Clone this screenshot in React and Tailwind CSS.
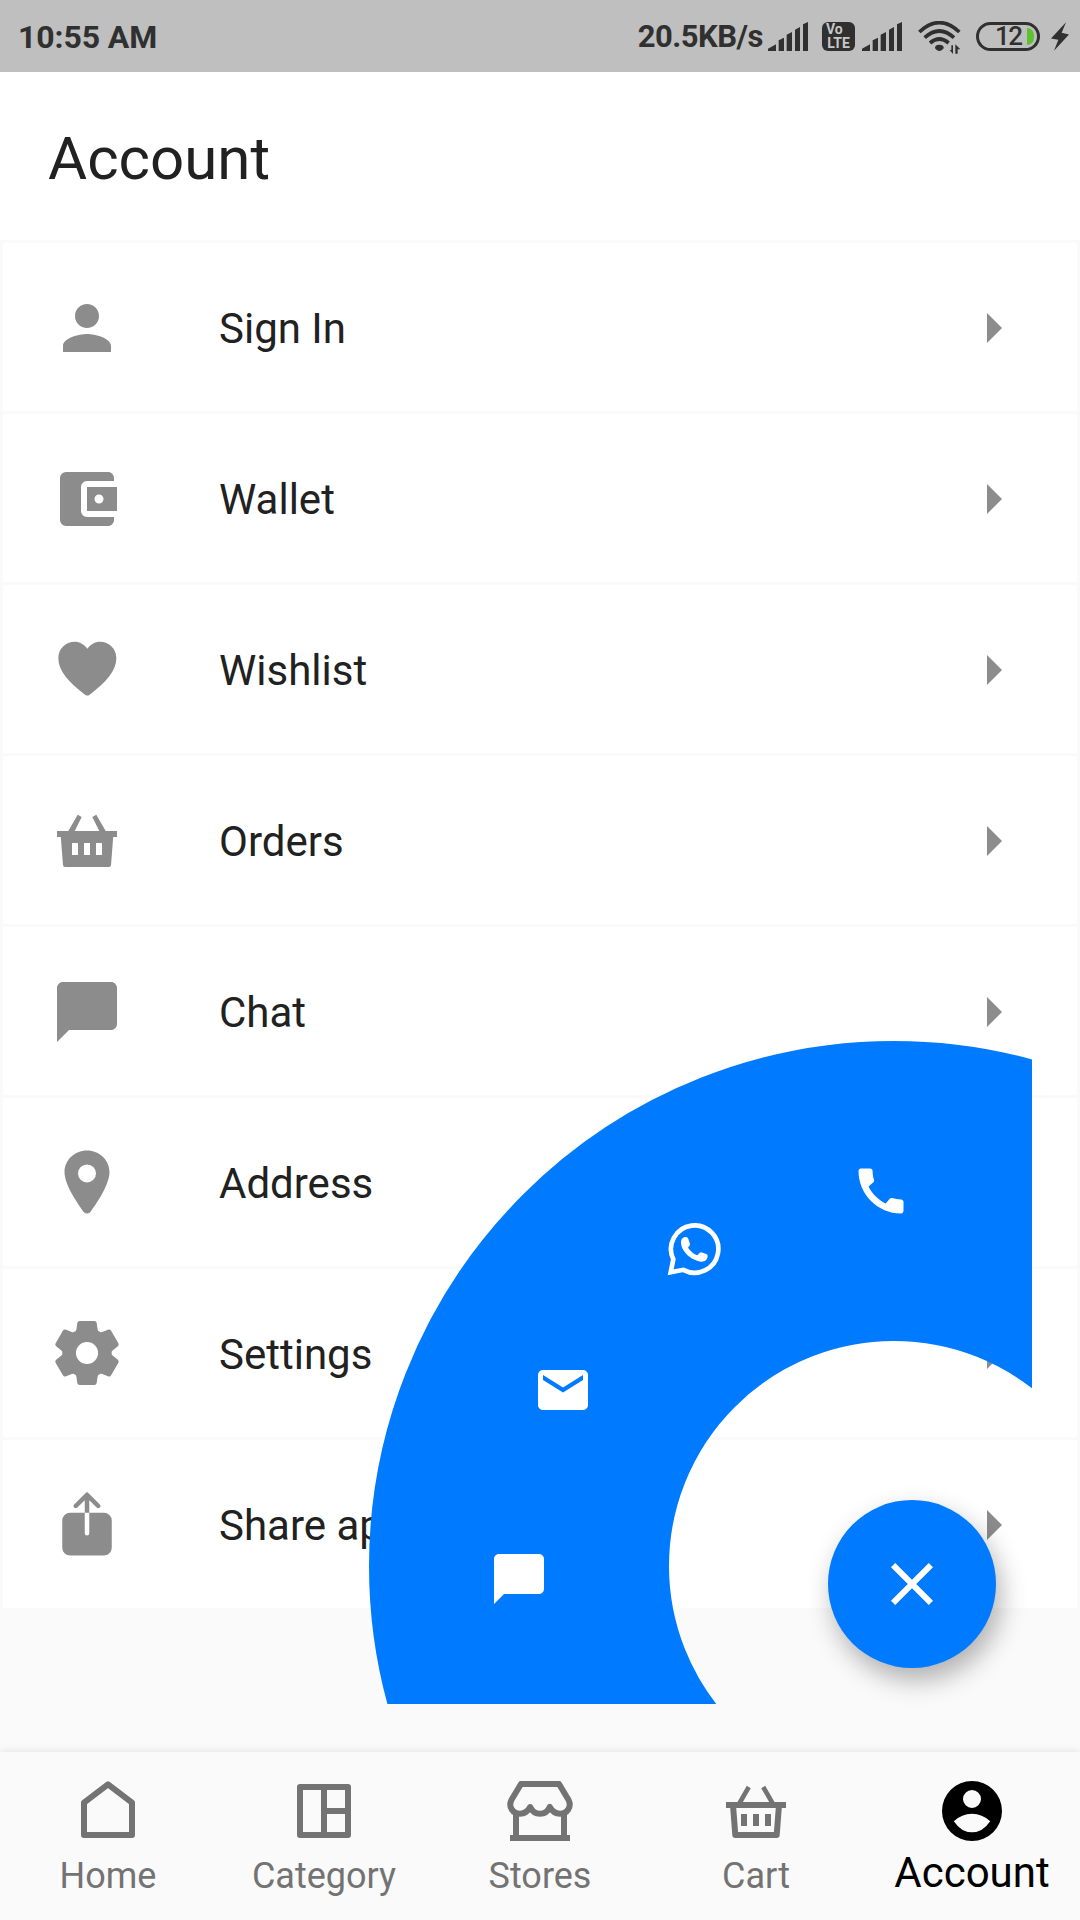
import React from 'react';
import { MdPerson, MdAccountBalanceWallet, MdChatBubble, MdArrowRight, MdEmail, MdClose } from 'react-icons/md';
import { IoShare } from 'react-icons/io5';

const HeartIcon = ({ className }) => (
  <svg viewBox="0 0 216 216" className={className} fill="currentColor">
    <path d="M109 44C118 31 132 23 147 23C174 23 196 44 196 72C196 112 165 144 116 182Q109 187 102 182C53 144 22 112 22 72C22 44 44 23 71 23C86 23 100 31 109 44Z" />
  </svg>
);

const BasketIcon = ({ className }) => (
  <svg viewBox="0 0 72 72" className={className} fill="currentColor">
    <path
      fillRule="evenodd"
      d="M6 26H17.3L26.7 9.7L30.7 12L23.7 26H48.3L41.3 12L45.3 9.7L54.7 26H66V32H62.2L60 60.2Q59.8 62 58 62H14Q12.2 62 12 60.2L9.8 32H6ZM21 38V50H27V38ZM33 38V50H39V38ZM45 38V50H51V38Z"
    />
  </svg>
);

const PinIcon = ({ className }) => (
  <svg viewBox="0 0 512 512" className={className} fill="currentColor">
    <path
      fillRule="evenodd"
      d="M256 32C167.78 32 96 100.65 96 185c0 40.17 18.31 93.59 54.42 158.78 29 52.34 62.55 99.67 80 123.22a31.75 31.75 0 0 0 51.22 0c17.42-23.55 51-70.88 80-123.22C397.69 278.61 416 225.19 416 185 416 100.65 344.22 32 256 32zM256 131a64 64 0 1 1 0 128a64 64 0 1 1 0-128z"
    />
  </svg>
);

const GEAR_ANGLES = [0, 60, 120, 180, 240, 300];

const GearIcon = ({ className }) => (
  <svg viewBox="-109 -109 218 218" className={className} fill="currentColor">
    <circle r="68" />
    {GEAR_ANGLES.map((angle) => (
      <path
        key={angle}
        transform={`rotate(${angle})`}
        d="M0 0L-38 -64Q-33 -65 -32 -72L-29.5 -90Q-28.5 -97 -22 -97H22Q28.5 -97 29.5 -90L32 -72Q33 -65 38 -64Z"
      />
    ))}
    <circle r="33.5" fill="#fff" />
  </svg>
);

const HomeIcon = ({ className }) => (
  <svg viewBox="0 0 72 72" className={className} fill="none" stroke="currentColor" strokeWidth="6" strokeLinejoin="round">
    <path d="M36 9.4L12 27.6V60H60V27.6Z" />
  </svg>
);

const CategoryIcon = ({ className }) => (
  <svg viewBox="0 0 72 72" className={className} fill="none" stroke="currentColor" strokeWidth="6" strokeLinejoin="round">
    <path d="M12 12H60V60H12ZM36 12V60M36 36H60" />
  </svg>
);

const StoreIcon = ({ className }) => (
  <svg viewBox="0 0 72 72" className={className} fill="none" stroke="currentColor" strokeWidth="6" strokeLinejoin="round">
    <path d="M17 9H55L64.6 25C68 32 63 38.7 56 38.7C51.5 38.7 48 36 45.8 32C44 36 40.5 38.7 36 38.7C31.5 38.7 28 36 26.2 32C24 36 20.5 38.7 16 38.7C9 38.7 4 32 7.4 25Z" />
    <path d="M12 37V63M60 37V63M6 63H66" />
  </svg>
);

const CartIcon = ({ className }) => (
  <svg viewBox="0 0 72 72" className={className} fill="none" stroke="currentColor" strokeWidth="6" strokeLinejoin="round">
    <path d="M6 30H66M13 30L15.3 60H56.7L59 30" />
    <path strokeWidth="4.6" d="M28.8 12L19 29M43.2 12L53 29" />
    <path d="M24 39V51M36 39V51M48 39V51" />
  </svg>
);

const AccountIcon = ({ className }) => (
  <svg viewBox="0 0 24 24" className={className} fill="currentColor">
    <path
      fillRule="evenodd"
      d="M12 2a10 10 0 1 1 0 20a10 10 0 1 1 0-20zM12 5a3 3 0 1 0 0 6a3 3 0 1 0 0-6zM5.95 15.4Q8.6 12.9 12 12.9T18.05 15.4Q15.6 19.1 12 19.1T5.95 15.4z"
    />
  </svg>
);

const PhoneIcon = ({ className }) => (
  <svg viewBox="0 0 24 24" className={className} fill="currentColor">
    <path d="M20.01 15.38c-1.23 0-2.42-.2-3.53-.56a.977.977 0 0 0-1.01.24l-1.57 1.97c-2.83-1.35-5.48-3.9-6.89-6.83l1.95-1.66c.27-.28.35-.67.24-1.02-.37-1.11-.56-2.3-.56-3.53 0-.54-.45-.99-.99-.99H4.19C3.65 3 3 3.24 3 3.99 3 13.28 10.73 21 20.01 21c.71 0 .99-.63.99-1.18v-3.45c0-.54-.45-.99-.99-.99z" />
  </svg>
);

const WhatsappIcon = ({ className }) => (
  <svg viewBox="0 0 180 180" className={className}>
    <path
      fill="none"
      stroke="currentColor"
      strokeWidth="14"
      d="M58 152.5A71 71 0 1 0 28 121L20 160Z"
    />
    <path
      fill="currentColor"
      d="M51 70C51 60 57 53 66 54Q71 54 73 60L78 74Q79 78 72 86Q84 103 100 109Q107 100 111 100L127 105Q132 107 131 112C130 124 120 130 110 128C82 124 51 98 51 70Z"
    />
  </svg>
);

const SignalIcon = ({ className }) => (
  <svg viewBox="0 0 120 87" className={className} fill="currentColor">
    <path d="M0 87V80L24 67V87ZM32 87V55L48 47V87ZM56 87V38L72 30V87ZM81 87V23L96 15V87ZM105 87V7L120 0V87Z" />
  </svg>
);

const WifiIcon = ({ className }) => (
  <svg viewBox="0 0 129 99" className={className} fill="none" stroke="currentColor">
    <path strokeWidth="11" d="M4 33Q64 -23 124 33M20 50Q64 10 108 50M36 66Q64 42 92 66" />
    <path fill="currentColor" stroke="none" d="M51 82Q50 72 64 71Q79 72 77 82L71 88Q64 92 57 88Z" />
    <path fill="currentColor" stroke="none" d="M105 73V99L95 87H100V73ZM112 98V70L127 85H119V98Z" />
  </svg>
);

const menuItems = [
  { label: 'Sign In', Icon: MdPerson },
  { label: 'Wallet', Icon: MdAccountBalanceWallet },
  { label: 'Wishlist', Icon: HeartIcon },
  { label: 'Orders', Icon: BasketIcon },
  { label: 'Chat', Icon: MdChatBubble },
  { label: 'Address', Icon: PinIcon, raised: true },
  { label: 'Settings', Icon: GearIcon, raised: true },
  { label: 'Share app', Icon: IoShare, raised: true }
];

const navItems = [
  { label: 'Home', Icon: HomeIcon },
  { label: 'Category', Icon: CategoryIcon },
  { label: 'Stores', Icon: StoreIcon },
  { label: 'Cart', Icon: CartIcon },
  { label: 'Account', Icon: AccountIcon, active: true }
];

const StatusBar = () => (
  <div className="h-[72px] shrink-0 bg-[#bfbfbf] text-[#303030] flex items-center pl-[18px] pr-[11px]">
    <span className="text-[32px] leading-[72px] font-bold tracking-[-0.1px] mt-0.5">10:55 AM</span>
    <div className="ml-auto flex items-center">
      <span className="text-[31px] leading-[72px] font-bold tracking-[-0.5px] mt-0.5 mr-[5px]">20.5KB/s</span>
      <SignalIcon className="w-[40px] h-[29px]" />
      <span className="ml-[14px] w-[33px] h-[29px] rounded-md bg-[#303030] text-[#c8c8c8] flex flex-col justify-center text-[14px] leading-[14px] font-bold">
        <span className="pl-1">Vo</span>
        <span className="text-center">LTE</span>
      </span>
      <SignalIcon className="ml-[7px] w-[40px] h-[29px]" />
      <WifiIcon className="ml-[16px] mt-[3px] w-[43px] h-[33px]" />
      <span className="ml-[15px] w-[64px] h-[29px] rounded-full border-[3px] border-[#303030] flex items-center pl-[16px]">
        <span className="text-[26px] leading-[26px] font-medium w-[32px] tracking-[-1.5px]">12</span>
        <span className="w-[7px] h-[17px] rounded-r-full bg-[#5ec22e]" />
      </span>
      <svg viewBox="0 0 54 86" className="ml-[11px] w-[18px] h-[29px]" fill="currentColor">
        <path d="M45 0L0 49L22 53L9 86L54 37L32 32Z" />
      </svg>
    </div>
  </div>
);

const MenuRow = ({ label, Icon, raised }) => (
  <div className="h-[168px] bg-white flex items-center px-12 pt-0.5">
    <Icon className={`w-[72px] h-[72px] text-[#8c8c8c] ${raised ? 'mb-0.5' : ''}`} />
    <span className="ml-24 mt-0.5 text-[42px] leading-none">{label}</span>
    <MdArrowRight className="ml-auto w-[72px] h-[72px] text-[#8c8c8c]" />
  </div>
);

// Open fan of contact shortcuts around the floating button
const ContactDial = () => (
  <>
    <div className="absolute left-[369px] top-[1041px] w-[663px] h-[663px] overflow-hidden text-white">
      <div className="w-[1050px] h-[1050px] rounded-full border-[300px] border-[#007aff]" />
      <PhoneIcon className="absolute left-[482px] top-[120px] w-[60px] h-[60px]" />
      <WhatsappIcon className="absolute left-[295px] top-[178px] w-[60px] h-[60px]" />
      <MdEmail className="absolute left-[164px] top-[319px] w-[60px] h-[60px]" />
      <MdChatBubble className="absolute left-[120px] top-[508px] w-[60px] h-[60px]" />
    </div>
    <button className="absolute left-[828px] top-[1500px] w-[168px] h-[168px] rounded-full bg-[#007aff] text-white flex items-center justify-center shadow-[5px_12px_26px_rgba(0,0,0,0.3)]">
      <MdClose className="w-[72px] h-[72px]" />
    </button>
  </>
);

const BottomNav = () => (
  <nav className="h-[168px] shrink-0 bg-[#fafafa] grid grid-cols-5 shadow-[0_-1px_8px_rgba(0,0,0,0.09)]">
    {navItems.map(({ label, Icon, active }) => (
      <div
        key={label}
        className={`flex flex-col items-center pt-[23px] ${active ? 'text-black' : 'text-[#737373]'}`}
      >
        <Icon className="w-[72px] h-[72px]" />
        <span className={active ? 'text-[42px] leading-[52px]' : 'text-[36px] leading-[58px]'}>{label}</span>
      </div>
    ))}
  </nav>
);

const App = () => {
  return (
    <div className="relative w-[1080px] h-[1920px] overflow-hidden flex flex-col bg-[#fafafa] font-[Roboto,sans-serif] text-[#212121]">
      <StatusBar />

      <header className="h-[168px] shrink-0 bg-white flex items-center pl-12 pt-1.5">
        <h1 className="text-[60px] leading-none">Account</h1>
      </header>

      <main className="flex-1 flex flex-col gap-[3px] p-[3px]">
        {menuItems.map((item) => (
          <MenuRow key={item.label} {...item} />
        ))}
      </main>

      <BottomNav />
      <ContactDial />
    </div>
  );
};

export default App;
